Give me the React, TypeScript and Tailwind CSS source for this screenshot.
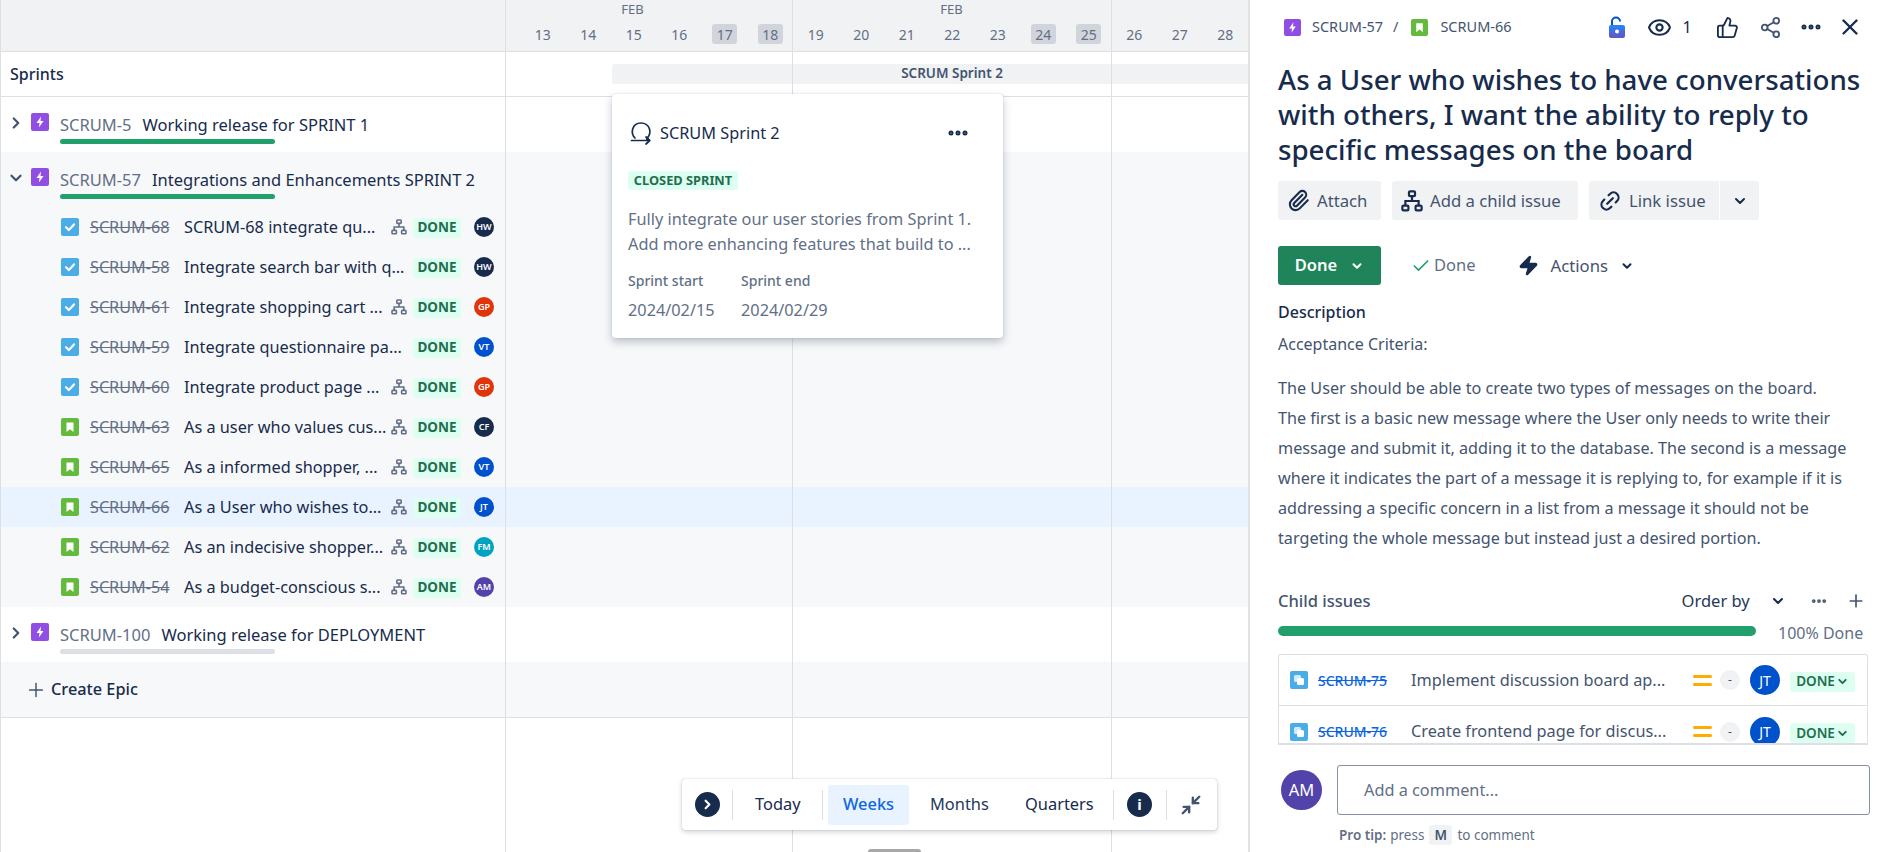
import React from "react";
import { ChevronRight, ChevronDown, Plus, Eye, ThumbsUp, Share2, X, Paperclip, Link2, Check, Zap, MoreHorizontal, Minimize2 } from "lucide-react";

const EpicIcon = ({ s = 18 }: { s?: number }) => (
  <svg width={s} height={s} viewBox="0 0 18 18" className="shrink-0">
    <rect width="18" height="18" rx="2" fill="#904ee2" />
    <path d="M10 3.5 5.5 10h3l-.6 4.5L12.5 8h-3z" fill="#fff" />
  </svg>
);
const TaskIcon = ({ s = 18 }: { s?: number }) => (
  <svg width={s} height={s} viewBox="0 0 18 18" className="shrink-0">
    <rect width="18" height="18" rx="2" fill="#4bade8" />
    <path d="m5 9.2 2.8 2.8L13 6.4" stroke="#fff" strokeWidth="2.2" fill="none" strokeLinecap="round" strokeLinejoin="round" />
  </svg>
);
const StoryIcon = ({ s = 18 }: { s?: number }) => (
  <svg width={s} height={s} viewBox="0 0 18 18" className="shrink-0">
    <rect width="18" height="18" rx="2" fill="#63ba3c" />
    <path d="M5.5 4.5h7v9.5L9 11.2 5.5 14z" fill="#fff" />
  </svg>
);
const SubtaskIcon = ({ s = 18 }: { s?: number }) => (
  <svg width={s} height={s} viewBox="0 0 18 18" className="shrink-0">
    <rect width="18" height="18" rx="2" fill="#4bade8" />
    <rect x="4" y="4" width="7" height="7" rx="1.5" fill="#fff" opacity=".75" />
    <rect x="7" y="7" width="7" height="7" rx="1.5" fill="#fff" />
  </svg>
);
const TreeIcon = ({ c = "#626f86", s = 16 }: { c?: string; s?: number }) => (
  <svg width={s} height={s} viewBox="0 0 16 16" fill="none" stroke={c} strokeWidth="1.6" className="shrink-0">
    <rect x="5.8" y="1" width="4.4" height="3.4" rx=".8" />
    <rect x="1" y="11.4" width="4.4" height="3.4" rx=".8" />
    <rect x="10.6" y="11.4" width="4.4" height="3.4" rx=".8" />
    <path d="M8 4.4V8M3.2 11.4V8h9.6v3.4" />
  </svg>
);
const SprintIcon = () => (
  <svg width="24" height="26" viewBox="0 0 24 26" fill="none" stroke="#172b4d" strokeWidth="1.7" strokeLinecap="round" strokeLinejoin="round" className="shrink-0">
    <path d="M5 18C2.5 15.6 1.8 12.6 2.6 9.2 3.6 5.4 7 3 11 3s7.6 2.4 8.6 6.2c.8 3.4 0 6-2 8.4-.4.5-.8 1-.8 2" />
    <path d="M1.5 20.5h18M16 17l3.8 3.5L16 24" />
  </svg>
);

const Done = () => (
  <span className="flex h-[20px] w-[48px] items-center justify-center rounded-[3px] bg-[#dcfff1] text-[13.5px] font-bold text-[#216e4e]">DONE</span>
);

const Avatar = ({ t, c }: { t: string; c: string }) => (
  <span className="flex h-[20px] w-[20px] items-center justify-center rounded-full text-[9px] font-semibold text-white" style={{ background: c }}>{t}</span>
);

const Row = ({ left, right, className = "" }: { left: React.ReactNode; right?: React.ReactNode; className?: string }) => (
  <div className={"flex " + className}>
    <div className="flex w-[506px] shrink-0 items-center border-x-[1px] border-x-[#dcdfe4]">{left}</div>
    <div className="min-w-0 flex-1">{right}</div>
  </div>
);

const Epic = ({ k, t, open, bar }: { k: string; t: string; open?: boolean; bar: string }) => (
  <div className="flex h-full items-start pt-[11px]">
    <span className="flex w-[30px] shrink-0 justify-center">
      {open ? <ChevronDown size={18} strokeWidth={3} className="mt-[6px] text-[#44546f]" /> : <ChevronRight size={18} strokeWidth={3} className="mt-[6px] text-[#44546f]" />}
    </span>
    <span className="mt-[5px]"><EpicIcon /></span>
    <div className="ml-[11px]">
      <div className="mt-[3px] h-[28px] whitespace-nowrap text-[16.5px] leading-[28px]">
        <span className="text-[#626f86]">{k}</span>
        <span className="ml-[11px]">{t}</span>
      </div>
      <div className={"h-[5px] w-[215px] rounded-full " + bar} />
    </div>
  </div>
);

const children = [
  { k: "SCRUM-68", t: "SCRUM-68 integrate qu...", i: "task", a: "HW", c: "#172b4d", tree: true },
  { k: "SCRUM-58", t: "Integrate search bar with q...", i: "task", a: "HW", c: "#172b4d" },
  { k: "SCRUM-61", t: "Integrate shopping cart ...", i: "task", a: "GP", c: "#de350b", tree: true },
  { k: "SCRUM-59", t: "Integrate questionnaire pa...", i: "task", a: "VT", c: "#0052cc" },
  { k: "SCRUM-60", t: "Integrate product page ...", i: "task", a: "GP", c: "#de350b", tree: true },
  { k: "SCRUM-63", t: "As a user who values cus...", i: "story", a: "CF", c: "#172b4d", tree: true },
  { k: "SCRUM-65", t: "As a informed shopper, ...", i: "story", a: "VT", c: "#0052cc", tree: true },
  { k: "SCRUM-66", t: "As a User who wishes to...", i: "story", a: "JT", c: "#0052cc", tree: true, sel: true },
  { k: "SCRUM-62", t: "As an indecisive shopper...", i: "story", a: "FM", c: "#00a3bf", tree: true },
  { k: "SCRUM-54", t: "As a budget-conscious s...", i: "story", a: "AM", c: "#5243aa", tree: true },
];

const days = [13, 14, 15, 16, 17, 18, 19, 20, 21, 22, 23, 24, 25, 26, 27, 28];

const Divider = ({ cls = "mx-[8px]" }: { cls?: string }) => <span className={"h-[30px] w-[1px] bg-[#dcdfe4] " + cls} />;

const ActionBtn = ({ icon, label, w, className = "" }: { icon: React.ReactNode; label: string; w: string; className?: string }) => (
  <div className={"flex h-[39px] items-center gap-[7px] bg-[#f1f2f4] pl-[9px] text-[16.7px] text-[#44546f] " + w + " " + className}>
    {icon}
    <span className="whitespace-nowrap">{label}</span>
  </div>
);

const ChildIssue = ({ k, t, border }: { k: string; t: string; border?: boolean }) => (
  <div className={"flex h-[51px] shrink-0 items-center pl-[11px] " + (border ? "border-b border-[#dcdfe4]" : "")}>
    <SubtaskIcon />
    <span className="ml-[10px] w-[93px] text-[14px] font-medium text-[#0c66e4] line-through">{k}</span>
    <span className="w-[282px] whitespace-nowrap text-[16.3px] text-[#44546f]">{t}</span>
    <span className="flex w-[19px] flex-col gap-[5px]">
      <span className="h-[3px] rounded bg-[#ffab00]" />
      <span className="h-[3px] rounded bg-[#ffab00]" />
    </span>
    <span className="ml-[8px] flex h-[20px] w-[20px] items-center justify-center rounded-full bg-[#f1f2f4] text-[12px] text-[#44546f]">-</span>
    <span className="ml-[10px] flex h-[30px] w-[30px] items-center justify-center rounded-full bg-[#0052cc] text-[14px] text-white">JT</span>
    <span className="ml-[10px] mt-[3px] flex h-[20px] w-[65px] items-center justify-center gap-[1px] rounded-[3px] bg-[#dcfff1] text-[13.5px] font-semibold text-[#216e4e]">
      DONE<ChevronDown size={13} strokeWidth={3.5} />
    </span>
  </div>
);

export default function App() {
  return (
    <div className="flex h-[852px] w-[1896px] overflow-hidden bg-white font-['Noto_Sans',sans-serif] text-[#172b4d]">
      <div className="relative flex w-[1248px] shrink-0 flex-col overflow-hidden">
        <Row
          className="h-[52px] shrink-0 border-b border-[#dcdfe4] bg-[#f1f2f4]"
          left={<span />}
          right={
            <div className="overflow-hidden">
              <div className="ml-[-33px] flex h-[18px] text-[13px] leading-[18px] text-[#626f86]">
                <span className="w-[319px] shrink-0 text-center">FEB</span>
                <span className="w-[319px] shrink-0 text-center">FEB</span>
              </div>
              <div className="ml-[14px] flex pt-[6px]">
                {days.map((d) => {
                  const we = [17, 18, 24, 25].includes(d);
                  return (
                    <span key={d} className="flex w-[45.5px] shrink-0 justify-center">
                      <span className={"flex h-[20px] w-[25px] items-center justify-center rounded-[3px] text-[14px] text-[#626f86] " + (we ? "bg-[#d1d5db]" : "")}>{d}</span>
                    </span>
                  );
                })}
              </div>
            </div>
          }
        />
        <Row
          className="h-[45px] shrink-0 border-b border-[#dcdfe4]"
          left={<span className="pl-[9px] text-[16px] font-medium">Sprints</span>}
          right={
            <div className="flex h-full items-center pb-[1px] pl-[106px]">
              <div className="flex h-[20px] flex-1 items-center justify-center rounded-l-[3px] bg-[#f1f2f4] pl-[44px] text-[13.5px] font-semibold text-[#44546f]">SCRUM Sprint 2</div>
            </div>
          }
        />
        <Row className="h-[55px] shrink-0" left={<Epic k="SCRUM-5" t="Working release for SPRINT 1" bar="bg-[#22a06b]" />} />
        <Row className="h-[55px] shrink-0 bg-[#f7f8f9]" left={<Epic k="SCRUM-57" t="Integrations and Enhancements SPRINT 2" open bar="bg-[#22a06b]" />} />
        {children.map((c) => (
          <Row
            key={c.k}
            className={"h-[40px] shrink-0 " + (c.sel ? "bg-[#e9f2ff]" : "bg-[#f7f8f9]")}
            left={
              <div className="flex w-full items-center pl-[60px] pr-[10px]">
                {c.i === "task" ? <TaskIcon /> : <StoryIcon />}
                <span className="ml-[11px] mt-[1px] w-[84px] shrink-0 whitespace-nowrap text-[16.2px] text-[#626f86] line-through">{c.k}</span>
                <span className="ml-[10px] mt-[1px] w-[207px] shrink-0 whitespace-nowrap text-[16.3px]">{c.t}</span>
                <span className="w-[22px] shrink-0">{c.tree && <TreeIcon />}</span>
                <span className="mt-[1px]"><Done /></span>
                <span className="ml-[13px]"><Avatar t={c.a} c={c.c} /></span>
              </div>
            }
          />
        ))}
        <Row className="h-[55px] shrink-0" left={<Epic k="SCRUM-100" t="Working release for DEPLOYMENT" bar="bg-[#dcdfe4]" />} />
        <Row
          className="h-[56px] shrink-0 border-b border-[#dcdfe4] bg-[#f7f8f9]"
          left={
            <div className="flex items-center pl-[24px]">
              <Plus size={22} strokeWidth={1.6} className="text-[#44546f]" />
              <span className="ml-[4px] text-[16.3px] font-medium">Create Epic</span>
            </div>
          }
        />
        <Row className="min-h-0 flex-1" left={<span />} />

        <div className="absolute bottom-0 left-[792px] top-0 w-[1px] bg-[#dcdfe4]" />
        <div className="absolute bottom-0 left-[1111px] top-0 w-[1px] bg-[#dcdfe4]" />

        <div className="absolute left-[612px] top-[94px] flex h-[244px] w-[391px] flex-col rounded-[3px] bg-white px-[16px] shadow-[0_4px_8px_rgba(9,30,66,0.25),0_0_1px_rgba(9,30,66,0.31)]">
          <div className="mt-[25px] flex h-[28px] items-center">
            <span className="ml-[2px]"><SprintIcon /></span>
            <span className="ml-[6px] text-[16.3px]">SCRUM Sprint 2</span>
            <MoreHorizontal size={24} strokeWidth={3} className="ml-auto mr-[17px] text-[#172b4d]" />
          </div>
          <div className="mt-[24px] flex h-[19px] w-[110px] items-center justify-center rounded-[3px] bg-[#dcfff1] text-[12.8px] font-bold text-[#216e4e]">CLOSED SPRINT</div>
          <div className="mt-[17px] whitespace-nowrap text-[16.3px] leading-[25px] text-[#626f86]">
            Fully integrate our user stories from Sprint 1.<br />Add more enhancing features that build to ...
          </div>
          <div className="mt-[14px] flex text-[#626f86]">
            <div className="w-[113px]">
              <div className="text-[14px] font-medium leading-[20px]">Sprint start</div>
              <div className="mt-[7px] text-[16.3px] leading-[24px]">2024/02/15</div>
            </div>
            <div>
              <div className="text-[14px] font-medium leading-[20px]">Sprint end</div>
              <div className="mt-[7px] text-[16.3px] leading-[24px]">2024/02/29</div>
            </div>
          </div>
        </div>

        <div className="absolute left-[682px] top-[779px] flex h-[51px] w-[535px] items-center rounded-[3px] bg-white pl-[13px] text-[16.4px] shadow-[0_2px_5px_rgba(9,30,66,0.2),0_0_1px_rgba(9,30,66,0.4)]">
          <span className="flex h-[25px] w-[25px] items-center justify-center rounded-full bg-[#172b4d] text-white"><ChevronRight size={15} strokeWidth={3.5} /></span>
          <Divider cls="ml-[12px]" />
          <span className="ml-[22px] w-[47px]">Today</span>
          <Divider cls="ml-[20px]" />
          <span className="ml-[5px] flex h-[40px] w-[81px] items-center justify-center rounded-[3px] bg-[#e9f2ff] font-medium text-[#0c66e4]">Weeks</span>
          <span className="ml-[21px] w-[60px] text-[#253858]">Months</span>
          <span className="ml-[35px] w-[69px]">Quarters</span>
          <Divider cls="ml-[19px]" />
          <span className="ml-[13px] flex h-[25px] w-[25px] items-center justify-center rounded-full bg-[#172b4d] text-[15px] font-bold text-white">i</span>
          <Divider cls="ml-[14px]" />
          <Minimize2 size={22} strokeWidth={2.6} className="ml-[13px] text-[#44546f]" />
        </div>
        <div className="absolute bottom-0 left-[868px] h-[3px] w-[53px] rounded-t-[4px] bg-[#a8a8a8]" />
      </div>

      <div className="flex w-[648px] shrink-0 flex-col border-l-2 border-[#dfe1e6] pl-[28px]">
        <div className="flex h-[54px] shrink-0 items-center text-[14.5px] text-[#44546f]">
          <span className="ml-[6px]"><EpicIcon s={17} /></span>
          <span className="ml-[11px] mb-[1px] w-[73px] whitespace-nowrap">SCRUM-57</span>
          <span className="ml-[8px] mb-[1px]">/</span>
          <span className="ml-[13px]"><StoryIcon s={17} /></span>
          <span className="ml-[12px] mb-[1px] w-[73px] whitespace-nowrap">SCRUM-66</span>
          <svg width="20" height="25" viewBox="0 0 20 25" className="ml-[94px]">
            <defs>
              <linearGradient id="lk" x1="0" y1="0" x2="0" y2="1"><stop offset="0" stopColor="#2684ff" /><stop offset="1" stopColor="#6554c0" /></linearGradient>
            </defs>
            <path d="M5 10V6.5a4 4 0 0 1 8 0" stroke="#0052cc" strokeWidth="2" fill="none" />
            <rect x="2" y="10" width="16" height="13" rx="2" fill="url(#lk)" />
            <circle cx="10" cy="16.5" r="2" fill="#fff" />
          </svg>
          <Eye size={25} strokeWidth={2} className="ml-[20px] text-[#172b4d]" />
          <span className="ml-[10px] text-[16px] text-[#172b4d]">1</span>
          <ThumbsUp size={23} strokeWidth={1.9} className="ml-[24px] text-[#172b4d]" />
          <Share2 size={23} strokeWidth={1.9} className="ml-[20px] text-[#44546f]" />
          <MoreHorizontal size={24} strokeWidth={3} className="ml-[17px] text-[#172b4d]" />
          <X size={26} strokeWidth={2.2} className="ml-[14px] text-[#172b4d]" />
        </div>
        <h1 className="mt-[8px] whitespace-nowrap text-[27.7px] font-medium leading-[35px]">
          As a User who wishes to have conversations<br />with others, I want the ability to reply to<br />specific messages on the board
        </h1>
        <div className="mt-[14px] flex h-[39px] shrink-0">
          <ActionBtn icon={<Paperclip size={23} strokeWidth={2.2} className="text-[#172b4d]" />} label="Attach" w="w-[103px]" className="rounded-[3px]" />
          <ActionBtn icon={<TreeIcon c="#172b4d" s={22} />} label="Add a child issue" w="w-[186px] ml-[11px]" className="rounded-[3px]" />
          <ActionBtn icon={<Link2 size={24} strokeWidth={2.2} className="-rotate-45 text-[#172b4d]" />} label="Link issue" w="w-[130px] ml-[11px]" className="rounded-l-[3px]" />
          <div className="ml-[1px] flex h-[39px] w-[39px] items-center justify-center rounded-r-[3px] bg-[#f1f2f4]"><ChevronDown size={16} strokeWidth={3} className="text-[#172b4d]" /></div>
        </div>
        <div className="mt-[26px] flex h-[39px] shrink-0 items-center">
          <div className="flex h-[39px] w-[103px] items-center justify-center gap-[13px] rounded-[3px] bg-[#1f845a] text-[16.5px] font-semibold text-white">
            Done<ChevronDown size={14} strokeWidth={3.5} />
          </div>
          <Check size={20} strokeWidth={2} className="ml-[30px] text-[#22a06b]" />
          <span className="ml-[3px] text-[16.5px] text-[#626f86]">Done</span>
          <Zap size={21} strokeWidth={2.2} fill="#172b4d" className="ml-[42px] text-[#172b4d]" />
          <span className="ml-[12px] text-[16.7px] text-[#44546f]">Actions</span>
          <ChevronDown size={14} strokeWidth={3.5} className="ml-[12px] text-[#172b4d]" />
        </div>
        <div className="mt-[15px] text-[16px] font-medium leading-[24px]">Description</div>
        <div className="mt-[8px] text-[16px] leading-[24px] text-[#44546f]">Acceptance Criteria:</div>
        <p className="mt-[17px] whitespace-nowrap text-[16.2px] leading-[30px] text-[#44546f]">
          The User should be able to create two types of messages on the board.<br />
          The first is a basic new message where the User only needs to write their<br />
          message and submit it, adding it to the database. The second is a message<br />
          where it indicates the part of a message it is replying to, for example if it is<br />
          addressing a specific concern in a list from a message it should not be<br />
          targeting the whole message but instead just a desired portion.
        </p>
        <div className="mt-[36px] flex h-[24px] shrink-0 items-center text-[16.5px]">
          <span className="font-medium text-[#44546f]">Child issues</span>
          <span className="ml-[311px] w-[70px] whitespace-nowrap text-[#253858]">Order by</span>
          <ChevronDown size={16} strokeWidth={3} className="ml-[18px]" />
          <MoreHorizontal size={18} strokeWidth={3} className="ml-[24px] text-[#44546f]" />
          <Plus size={20} strokeWidth={2} className="ml-[18px] text-[#44546f]" />
        </div>
        <div className="mt-[8px] flex h-[20px] shrink-0 items-center">
          <div className="h-[10px] w-[478px] rounded-full bg-[#22a06b]" />
          <span className="ml-[22px] pt-[3px] text-[16px] text-[#626f86]">100% Done</span>
        </div>
        <div className="mt-[13px] flex h-[91px] w-[590px] shrink-0 flex-col overflow-hidden rounded-t-[3px] border-x border-t border-b-2 border-[#dcdfe4]">
          <ChildIssue k="SCRUM-75" t="Implement discussion board ap..." border />
          <ChildIssue k="SCRUM-76" t="Create frontend page for discus..." />
        </div>
        <div className="mt-[20px] flex shrink-0">
          <span className="ml-[3px] mt-[5px] flex h-[40px] w-[41px] items-center justify-center rounded-full bg-[#5243aa] text-[16.5px] text-white">AM</span>
          <div className="ml-[15px] flex h-[50px] w-[533px] items-center rounded-[3px] border border-[#8590a2] pl-[26px] text-[16.3px] text-[#626f86]">Add a comment...</div>
        </div>
        <div className="ml-[61px] mt-[10px] flex items-center text-[13.5px] text-[#626f86]">
          <span className="font-semibold">Pro tip:</span>
          <span className="ml-[4px]">press</span>
          <span className="ml-[5px] flex h-[20px] w-[23px] items-center justify-center rounded-[3px] bg-[#f1f2f4] font-semibold text-[#44546f]">M</span>
          <span className="ml-[5px]">to comment</span>
        </div>
      </div>
    </div>
  );
}
